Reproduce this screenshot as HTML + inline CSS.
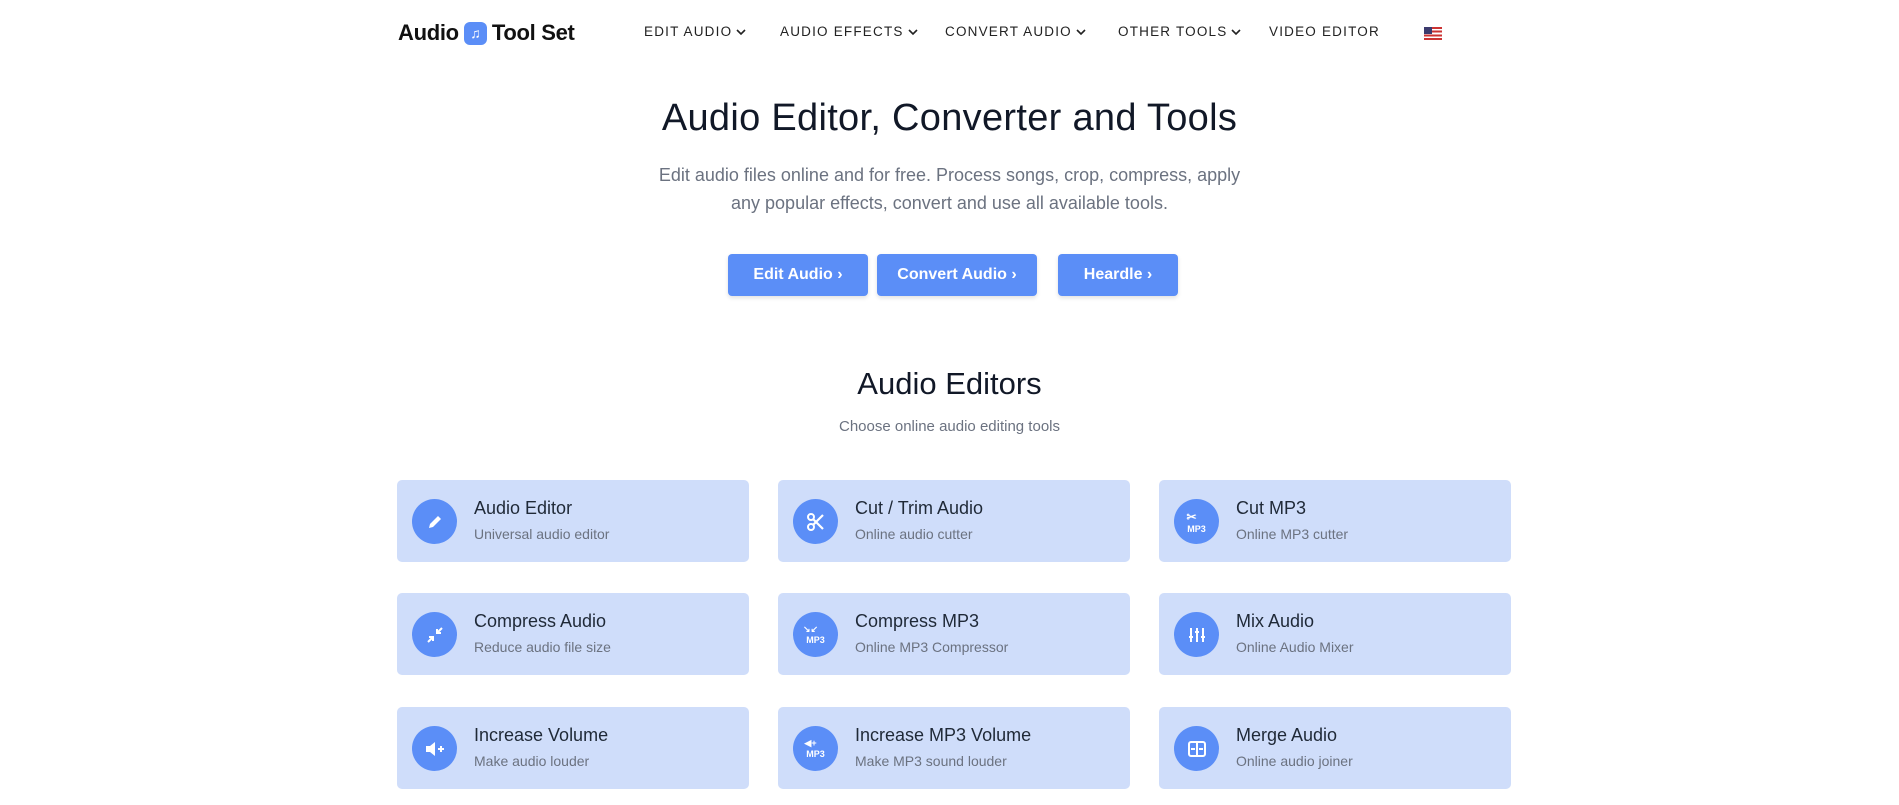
<!DOCTYPE html>
<html><head><meta charset="utf-8"><style>
*{box-sizing:border-box;margin:0;padding:0}
body{width:1899px;height:805px;overflow:hidden;background:#fff;font-family:"Liberation Sans",sans-serif;color:#1f2937}
.logo{position:absolute;left:398px;top:20px;font-weight:bold;font-size:22px;color:#111;display:flex;align-items:center;letter-spacing:-0.3px}
.logo .ic{width:23px;height:23px;background:#5b8ef7;border-radius:6px;margin:0 5px;display:inline-flex;align-items:center;justify-content:center;color:#fff;font-size:14px}
.nav{position:absolute;top:24px;font-size:13.5px;letter-spacing:1.2px;color:#222}
.nav svg{vertical-align:middle;margin-left:4px}
.flag{position:absolute;left:1424px;top:27px;width:18px;height:13px;background:repeating-linear-gradient(#c33 0 1.9px,#fff 1.9px 3.7px)}
.flag:after{content:"";position:absolute;left:0;top:0;width:8px;height:7px;background:#3c3b6e}
h1{position:absolute;left:0;width:1899px;top:97px;text-align:center;font-weight:normal;font-size:38px;color:#111827;letter-spacing:0.3px}
.sub{position:absolute;left:0;width:1899px;top:161px;text-align:center;font-size:18px;line-height:28px;color:#6b7280}
.btn{position:absolute;top:254px;height:42px;background:#5b8ef7;color:#fff;font-weight:bold;font-size:16px;border-radius:4px;display:flex;align-items:center;justify-content:center;box-shadow:0 2px 4px rgba(0,0,0,.12)}
h2{position:absolute;left:0;width:1899px;top:366px;text-align:center;font-weight:normal;font-size:31px;color:#111827}
.cap{position:absolute;left:0;width:1899px;top:418px;text-align:center;font-size:15px;color:#6b7280}
.card{position:absolute;width:352px;height:82px;background:#cfddfa;border-radius:5px}
.card .c{position:absolute;left:15px;top:19px;width:45px;height:45px;border-radius:50%;background:#5b8ef7;display:flex;align-items:center;justify-content:center;color:#fff;font-weight:bold;font-size:9px;flex-direction:column}
.card .t{position:absolute;left:77px;top:18px;font-size:18px;color:#1f2937}
.card .s{position:absolute;left:77px;top:46px;font-size:14px;color:#6b7280}
</style></head><body>
<div class="logo">Audio<span class="ic">♫</span>Tool Set</div>
<div class="nav" style="left:644px">EDIT AUDIO<svg width="10" height="7"><path d="M1 1l4 4 4-4" stroke="#222" stroke-width="1.6" fill="none"/></svg></div>
<div class="nav" style="left:780px">AUDIO EFFECTS<svg width="10" height="7"><path d="M1 1l4 4 4-4" stroke="#222" stroke-width="1.6" fill="none"/></svg></div>
<div class="nav" style="left:945px">CONVERT AUDIO<svg width="10" height="7"><path d="M1 1l4 4 4-4" stroke="#222" stroke-width="1.6" fill="none"/></svg></div>
<div class="nav" style="left:1118px">OTHER TOOLS<svg width="10" height="7"><path d="M1 1l4 4 4-4" stroke="#222" stroke-width="1.6" fill="none"/></svg></div>
<div class="nav" style="left:1269px">VIDEO EDITOR</div>
<div class="flag"></div>
<h1>Audio Editor, Converter and Tools</h1>
<div class="sub">Edit audio files online and for free. Process songs, crop, compress, apply<br>any popular effects, convert and use all available tools.</div>
<div class="btn" style="left:728px;width:140px">Edit Audio ›</div>
<div class="btn" style="left:877px;width:160px">Convert Audio ›</div>
<div class="btn" style="left:1058px;width:120px">Heardle ›</div>
<h2>Audio Editors</h2>
<div class="cap">Choose online audio editing tools</div>

<div class="card" style="left:397px;top:480px"><div class="c"><svg width="18" height="18" viewBox="0 0 18 18"><path d="M3 15l1-4 8-8 3 3-8 8z" fill="#fff"/></svg></div><div class="t">Audio Editor</div><div class="s">Universal audio editor</div></div>
<div class="card" style="left:778px;top:480px"><div class="c"><svg width="20" height="20" viewBox="0 0 20 20"><circle cx="5" cy="5" r="3" stroke="#fff" stroke-width="2" fill="none"/><circle cx="5" cy="15" r="3" stroke="#fff" stroke-width="2" fill="none"/><path d="M7 7l10 10M7 13L17 3" stroke="#fff" stroke-width="2.2"/></svg></div><div class="t">Cut / Trim Audio</div><div class="s">Online audio cutter</div></div>
<div class="card" style="left:1159px;top:480px"><div class="c"><span style="font-size:12px;margin-left:-10px">✂</span><span>MP3</span></div><div class="t">Cut MP3</div><div class="s">Online MP3 cutter</div></div>

<div class="card" style="left:397px;top:593px"><div class="c"><svg width="18" height="18" viewBox="0 0 18 18"><path d="M2 16l5-5M3 11h4v4M16 2l-5 5M11 3v4h4" stroke="#fff" stroke-width="2" fill="none"/></svg></div><div class="t">Compress Audio</div><div class="s">Reduce audio file size</div></div>
<div class="card" style="left:778px;top:593px"><div class="c"><span style="font-size:9px;margin-left:-10px">↘↙</span><span>MP3</span></div><div class="t">Compress MP3</div><div class="s">Online MP3 Compressor</div></div>
<div class="card" style="left:1159px;top:593px"><div class="c"><svg width="18" height="18" viewBox="0 0 18 18"><path d="M3 2v14M9 2v14M15 2v14M1 11h4M7 6h4M13 11h4" stroke="#fff" stroke-width="2"/></svg></div><div class="t">Mix Audio</div><div class="s">Online Audio Mixer</div></div>

<div class="card" style="left:397px;top:707px"><div class="c"><svg width="20" height="18" viewBox="0 0 20 18"><path d="M1 6h4l5-4v14l-5-4H1z" fill="#fff"/><path d="M13 9h6M16 6v6" stroke="#fff" stroke-width="2"/></svg></div><div class="t">Increase Volume</div><div class="s">Make audio louder</div></div>
<div class="card" style="left:778px;top:707px"><div class="c"><span style="font-size:9px;margin-left:-10px">◀+</span><span>MP3</span></div><div class="t">Increase MP3 Volume</div><div class="s">Make MP3 sound louder</div></div>
<div class="card" style="left:1159px;top:707px"><div class="c"><svg width="20" height="18" viewBox="0 0 20 18"><rect x="2" y="2" width="16" height="14" rx="2" stroke="#fff" stroke-width="2" fill="none"/><path d="M10 2v14M4 9h4M12 9h4" stroke="#fff" stroke-width="2"/></svg></div><div class="t">Merge Audio</div><div class="s">Online audio joiner</div></div>
</body></html>
